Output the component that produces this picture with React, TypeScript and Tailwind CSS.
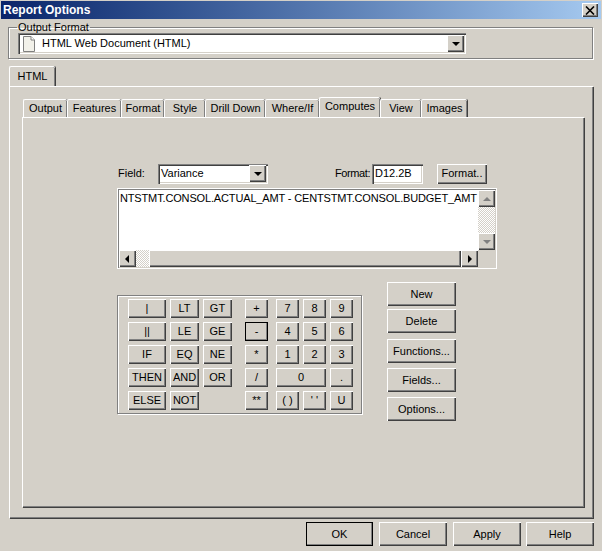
const raised =
  "bg-[#d4d0c8] shadow-[inset_1px_1px_0_#ffffff,inset_-1px_-1px_0_#404040,inset_-2px_-2px_0_#808080]";
const sunken =
  "shadow-[inset_1px_1px_0_#808080,inset_2px_2px_0_#404040,inset_-1px_-1px_0_#ffffff,inset_-2px_-2px_0_#d4d0c8]";
const dither = "bg-[repeating-conic-gradient(#ffffff_0_25%,#d4d0c8_0_50%)] bg-[length:2px_2px]";

function ScrollButton({ dir, muted }: { dir: "up" | "down" | "left" | "right"; muted?: boolean }) {
  const points = {
    up: "4,2 0,6 8,6",
    down: "0,2 8,2 4,6",
    left: "5,0 5,8 1,4",
    right: "2,0 2,8 6,4",
  }[dir];
  return (
    <div className={`${raised} flex h-[17px] w-[17px] shrink-0 items-center justify-center`}>
      <svg width="8" height="8" viewBox="0 0 8 8" className="block">
        <polygon points={points} fill={muted ? "#808080" : "#000000"} />
      </svg>
    </div>
  );
}

function Combo({ className, children }: { className: string; children: React.ReactNode }) {
  return (
    <div className={`${sunken} flex items-center bg-white p-[2px] ${className}`}>
      <div className="flex min-w-0 flex-1 items-center">{children}</div>
      <ScrollButton dir="down" />
    </div>
  );
}

function Btn({ label, className = "" }: { label: string; className?: string }) {
  return (
    <button className={`${raised} flex items-center justify-center text-[11px] text-black ${className}`}>
      {label}
    </button>
  );
}

const innerTabs = ["Output", "Features", "Format", "Style", "Drill Down", "Where/If", "Computes", "View", "Images"];
const tabWidths = [44, 54, 43, 41, 60, 54, 61, 41, 46];

function KeyPad() {
  const logic = ["|", "LT", "GT", "||", "LE", "GE", "IF", "EQ", "NE", "THEN", "AND", "OR", "ELSE", "NOT", ""];
  const math = ["+", "-", "*", "/", "**"];
  const nums = ["7", "8", "9", "4", "5", "6", "1", "2", "3"];
  return (
    <div className="flex h-[119px] w-[245px] gap-[13px] border border-[#808080] pl-[10px] pt-[3px] shadow-[1px_1px_0_#ffffff,inset_1px_1px_0_#ffffff]">
      <div className="grid h-fit grid-cols-[38px_29px_29px] gap-[4px] [grid-auto-rows:19px]">
        {logic.map((k, i) => (k ? <Btn key={i} label={k} /> : <div key={i} />))}
      </div>
      <div className="flex h-fit flex-col gap-[4px]">
        {math.map((k) => (
          <Btn
            key={k}
            label={k}
            className={`h-[19px] w-[23px] ${k === "-" ? "outline outline-1 -outline-offset-1 outline-black" : ""}`}
          />
        ))}
      </div>
      <div className="-ml-[5px] grid h-fit grid-cols-[23px_23px_23px] gap-[4px] [grid-auto-rows:19px]">
        {nums.map((k) => (
          <Btn key={k} label={k} />
        ))}
        <Btn label="0" className="col-span-2" />
        <Btn label="." />
        <Btn label="( )" />
        <Btn label="' '" />
        <Btn label="U" />
      </div>
    </div>
  );
}

export default function App() {
  return (
    <div className="flex h-[551px] w-[602px] flex-col overflow-hidden bg-[#d4d0c8] font-['Liberation_Sans',Arial,sans-serif] text-[11px] text-black">
      <div className="mx-px mt-px flex h-[18px] shrink-0 items-center justify-between bg-gradient-to-r from-[#0a246a] to-[#a6caf0] pl-[2px] pr-[3px]">
        <span className="text-[12px] font-bold leading-none text-white">Report Options</span>
        <div className={`${raised} flex h-[14px] w-[16px] items-center justify-center`}>
          <svg width="10" height="9" viewBox="0 0 10 9" className="block">
            <path d="M1 0.5 L9 8.5 M9 0.5 L1 8.5" stroke="#000000" strokeWidth="1.6" />
          </svg>
        </div>
      </div>

      <fieldset className="ml-[8px] mt-[1px] h-[39px] w-[585px] shrink-0 border border-[#808080] pl-[9px] shadow-[1px_1px_0_#ffffff,inset_1px_1px_0_#ffffff]">
        <legend className="ml-[-1px] px-px text-[11px] leading-[14px]">Output Format</legend>
        <Combo className="mt-[-1px] h-[21px] w-[448px]">
          <svg width="14" height="16" viewBox="0 0 14 16" className="ml-[2px] block">
            <path d="M1.5 0.5 H9 L12.5 4 V15.5 H1.5 Z" fill="#f2f1ea" stroke="#808080" />
            <path d="M9 0.5 V4 H12.5" fill="#ffffff" stroke="#808080" />
          </svg>
          <span className="ml-[6px]">HTML Web Document (HTML)</span>
        </Combo>
      </fieldset>

      <div className="ml-[9px] mt-[6px] flex h-[21px] shrink-0 items-end">
        <div className="flex h-[20px] w-[46px] items-center justify-center rounded-t-[2px] border-l border-t border-white shadow-[inset_-1px_0_0_#808080,1px_0_0_#404040]">
          HTML
        </div>
      </div>

      <div className="ml-[9px] flex h-[432px] w-[584px] shrink-0 flex-col border-l border-t border-white px-[12px] pt-[11px] shadow-[inset_-1px_-1px_0_#808080,1px_1px_0_#404040]">
        <div className="flex h-[19px] shrink-0 items-end pl-px">
          {innerTabs.map((t, i) => (
            <div
              key={t}
              style={{ width: tabWidths[i] }}
              className={`flex shrink-0 items-center justify-center rounded-t-[2px] border-l border-t border-white shadow-[inset_-1px_0_0_#808080,1px_0_0_#404040] ${
                t === "Computes" ? "h-[20px] pb-[2px]" : "h-[18px]"
              }`}
            >
              {t}
            </div>
          ))}
        </div>

        <div className="flex h-[390px] w-[562px] shrink-0 flex-col border-l border-t border-white pl-[94px] pt-[45px] shadow-[inset_-1px_-1px_0_#808080,1px_1px_0_#404040]">
          <div className="flex h-[21px] items-center">
            <span className="w-[41px] pl-px">Field:</span>
            <Combo className="h-[20px] w-[110px]">
              <span className="pl-px">Variance</span>
            </Combo>
            <span className="ml-[67px] w-[37px] tracking-[-0.4px]">Format:</span>
            <div className={`${sunken} flex h-[20px] w-[51px] items-center bg-white pl-[3px]`}>D12.2B</div>
            <Btn label="Format.." className="ml-[14px] h-[20px] w-[50px]" />
          </div>

          <div className="mt-[4px] flex h-[81px] w-[380px] flex-col border border-white bg-[#d4d0c8] p-px shadow-[inset_1px_1px_0_#808080]">
            <div className="flex min-h-0 flex-1 bg-white">
              <div className="flex min-w-0 flex-1 items-start overflow-hidden whitespace-nowrap pl-px">
                <span className="shrink-0 tracking-[-0.15px]">NTSTMT.CONSOL.ACTUAL_AMT - CENTSTMT.CONSOL.BUDGET_AMT</span>
                <span className="ml-px h-[15px] w-px shrink-0 bg-black" />
              </div>
              <div className="flex w-[17px] shrink-0 flex-col">
                <ScrollButton dir="up" muted />
                <div className={`flex-1 ${dither}`} />
                <ScrollButton dir="down" muted />
              </div>
            </div>
            <div className="flex h-[17px] shrink-0">
              <ScrollButton dir="left" />
              <div className={`w-[13px] ${dither}`} />
              <div className={`${raised} w-[312px]`} />
              <ScrollButton dir="right" />
            </div>
          </div>

          <div className="mt-[13px] flex items-start gap-[25px]">
            <div className="mt-[13px]">
              <KeyPad />
            </div>
            <div className="flex flex-col">
              <Btn label="New" className="h-[24px] w-[69px]" />
              <Btn label="Delete" className="mt-[3px] h-[24px] w-[69px]" />
              <Btn label="Functions..." className="mt-[6px] h-[24px] w-[69px]" />
              <Btn label="Fields..." className="mt-[5px] h-[24px] w-[69px]" />
              <Btn label="Options..." className="mt-[5px] h-[24px] w-[69px]" />
            </div>
          </div>
        </div>
      </div>

      <div className="ml-[306px] mt-[4px] flex">
        <Btn label="OK" className="h-[24px] w-[67px] outline outline-1 -outline-offset-1 outline-black" />
        <Btn label="Cancel" className="ml-[6px] h-[24px] w-[68px]" />
        <Btn label="Apply" className="ml-[6px] h-[24px] w-[68px]" />
        <Btn label="Help" className="ml-[5px] h-[24px] w-[68px]" />
      </div>
    </div>
  );
}
